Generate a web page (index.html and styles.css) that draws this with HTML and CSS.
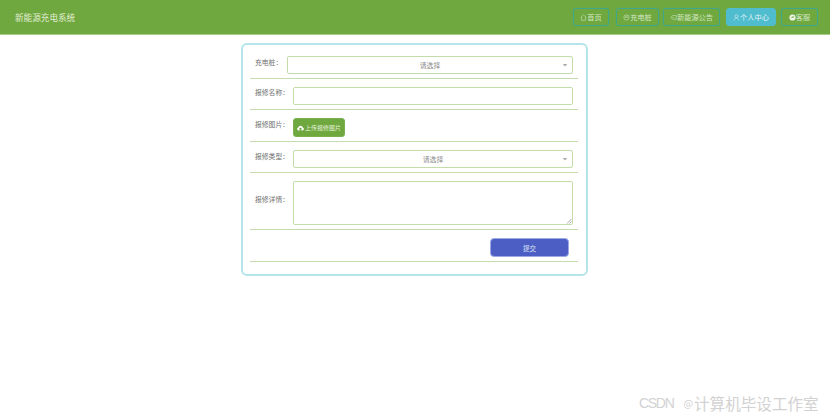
FILE: index.html
```html
<!DOCTYPE html>
<html lang="zh">
<head>
<meta charset="utf-8">
<title>新能源充电系统</title>
<link rel="stylesheet" href="styles.css">
</head>
<body>
<header class="topbar">
  <div class="brand">新能源充电系统</div>
  <nav class="nav">
    <a class="nav-btn w-home"><svg class="ico" viewBox="0 0 10 10"><path d="M1 5 5 1.200 9 5M2.200 4.200V9h5.600V4.200" fill="none" stroke="currentColor" stroke-width=".8"/></svg>首页</a>
    <a class="nav-btn w-pile"><svg class="ico" viewBox="0 0 10 10"><circle cx="5" cy="5" r="3.800" fill="none" stroke="currentColor" stroke-width=".8"/><path d="M2.500 5h5M3 3.200h4" stroke="currentColor" stroke-width=".7"/></svg>充电桩</a>
    <a class="nav-btn w-news"><svg class="ico" viewBox="0 0 10 10"><path d="M1 5 4 2.200h5v5.400H4z" fill="none" stroke="currentColor" stroke-width=".8"/><circle cx="4.400" cy="5" r=".8" fill="currentColor"/></svg>新能源公告</a>
    <a class="nav-btn nav-active w-user"><svg class="ico" viewBox="0 0 10 10"><circle cx="5" cy="3.200" r="2.100" fill="none" stroke="currentColor" stroke-width=".8"/><path d="M1.600 9.200C2 6.800 3.400 5.600 5 5.600s3 1.200 3.400 3.600" fill="none" stroke="currentColor" stroke-width=".8"/></svg>个人中心</a>
    <a class="nav-btn w-service"><svg class="ico" viewBox="0 0 10 10"><circle cx="5" cy="5" r="4.400" fill="currentColor"/><path d="M2.500 5.400 4.600 3.600 7.800 3.400 6 5.400z" fill="#6fa83f"/></svg>客服</a>
  </nav>
</header>

<main class="card">
  <div class="row row-first">
    <label class="label label-narrow">充电桩：</label>
    <div class="select"><span class="select-text">请选择</span><svg class="caret" viewBox="0 0 8 5"><path d="M1 1h6L4 4.500z" fill="#aaa"/></svg></div>
  </div>
  <div class="row row-name">
    <label class="label">报修名称：</label>
    <div class="input"></div>
  </div>
  <div class="row row-upload">
    <label class="label">报修图片：</label>
    <button class="upload" type="button"><svg class="cloud" viewBox="0 0 10 8"><path d="M2.400 7.400C1 7.400.2 6.500.2 5.400c0-1 .7-1.800 1.700-2C2.300 1.700 3.500.7 5 .7c1.600 0 2.900 1.100 3.100 2.700 1 .2 1.700 1 1.700 2 0 1.100-.8 2-2.200 2H6.200V5.300h1.100L5 3.200 2.700 5.300h1.100v2.100z" fill="#fff"/></svg>上传报修图片</button>
  </div>
  <div class="row row-type">
    <label class="label">报修类型：</label>
    <div class="select select-type"><span class="select-text">请选择</span><svg class="caret" viewBox="0 0 8 5"><path d="M1 1h6L4 4.500z" fill="#aaa"/></svg></div>
  </div>
  <div class="row row-detail">
    <label class="label">报修详情：</label>
    <div class="textarea"><svg class="grip" viewBox="0 0 6 6"><path d="M5.500 1 1 5.500M5.500 3.500 3.500 5.500" stroke="#888" stroke-width=".7"/></svg></div>
  </div>
  <div class="row row-submit">
    <button class="submit" type="button">提交</button>
  </div>
</main>

<div class="watermark"><span class="wm-latin">CSDN</span><span class="wm-at">@</span>计算机毕设工作室</div>
</body>
</html>
```
FILE: styles.css
```css
* { box-sizing: border-box; }
html, body { margin: 0; padding: 0; }
body {
  width: 830px;
  height: 419px;
  background: #fff;
  overflow: hidden;
  position: relative;
  font-family: "Noto Sans CJK SC", "Liberation Sans", sans-serif;
}
.topbar {
  height: 35px;
  background: #6fa83f;
  border-bottom: 1px solid #a9cb8b;
  display: flex;
  align-items: center;
  justify-content: space-between;
  padding: 0 12px 0 15px;
}
.brand { color: #e0ecd2; font-size: 8.600px; line-height: 14px; }
.nav { display: flex; align-items: center; height: 18px; }
.nav-btn {
  height: 18px;
  display: flex;
  align-items: center;
  justify-content: center;
  border: 1px solid #3fa88c;
  border-radius: 3px;
  box-shadow: 0 0 1px #3fa88c;
  color: #d3e6c4;
  font-size: 7.200px;
  white-space: nowrap;
}
.nav-active { background: #4fbdce; border-color: #4fbdce; box-shadow: none; color: #e4f4f6; }
.ico { width: 7px; height: 7px; flex: none; }
.w-home { width: 36px; margin-right: 7px; }
.w-pile { width: 43px; margin-right: 4px; }
.w-news { width: 57px; margin-right: 6px; }
.w-user { width: 50px; margin-right: 5px; }
.w-service { width: 37px; }
.w-service .ico { color: #eef5e8; }

.card {
  width: 347px;
  height: 233px;
  margin: 8px 0 0 241px;
  border: 2px solid #b4e5ea;
  border-radius: 6px;
  padding: 0 8px 0 7px;
  display: flex;
  flex-direction: column;
}
.row {
  display: flex;
  border-bottom: 1px solid #c6dcae;
  flex: none;
  position: relative;
}
.label {
  width: 38px;
  flex: none;
  margin-left: 5px;
  color: #707070;
  font-size: 6.800px;
  line-height: 10px;
  white-space: nowrap;
}
.label-narrow { width: 31px; margin-right: 1px; }
.row-first { height: 34px; padding-top: 11px; }
.row-first .label { padding-top: 1px; }
.row-name { height: 31px; padding-top: 8px; }
.row-upload { height: 32px; padding-top: 8px; }
.row-upload .label { padding-top: 1px; }
.row-type { height: 31px; padding-top: 8px; }
.row-type .label { padding-top: 1px; }
.row-detail { height: 57px; padding-top: 8px; }
.row-detail .label { padding-top: 13px; }
.row-submit { height: 32px; padding-top: 8px; justify-content: flex-end; padding-right: 9px; }

.select, .input, .textarea {
  border: 1px solid #c3dcaa;
  border-radius: 2px;
  background: #fff;
  height: 18px;
}
.select {
  width: 286px;
  display: flex;
  align-items: center;
  justify-content: center;
  position: relative;
}
.select-type { width: 280px; }
.select-text { color: #8a8a8a; font-size: 6.800px; line-height: 10px; }
.caret { position: absolute; right: 4px; top: 6px; width: 6px; height: 4px; }
.input { width: 280px; }
.textarea { width: 280px; height: 44px; position: relative; }
.grip { position: absolute; right: 0; bottom: 0; width: 6px; height: 6px; }
.upload {
  width: 52px;
  height: 19px;
  padding: 0;
  border: 1px solid #7bb050;
  border-radius: 3px;
  background: #6fa83f;
  color: #e4efd8;
  font-family: inherit;
  font-size: 6px;
  display: flex;
  align-items: center;
  justify-content: center;
  white-space: nowrap;
}
.cloud { width: 7px; height: 6px; margin-right: 1px; flex: none; }
.submit {
  width: 79px;
  height: 19px;
  padding: 0;
  border: 1px solid #9ea8e4;
  border-radius: 4px;
  background: #4c5ec4;
  color: #dfe3f7;
  font-family: inherit;
  font-size: 6.500px;
}
.watermark {
  position: absolute;
  left: 639px;
  top: 393px;
  display: flex;
  align-items: center;
  color: #d2d2d2;
  font-size: 15.600px;
  line-height: 20px;
  white-space: nowrap;
}
.wm-latin {
  font-family: "Liberation Sans", sans-serif;
  font-size: 14px;
  letter-spacing: -1.300px;
  margin-right: 10px;
}
.wm-at { font-size: 10px; margin-right: 1px; }
```
